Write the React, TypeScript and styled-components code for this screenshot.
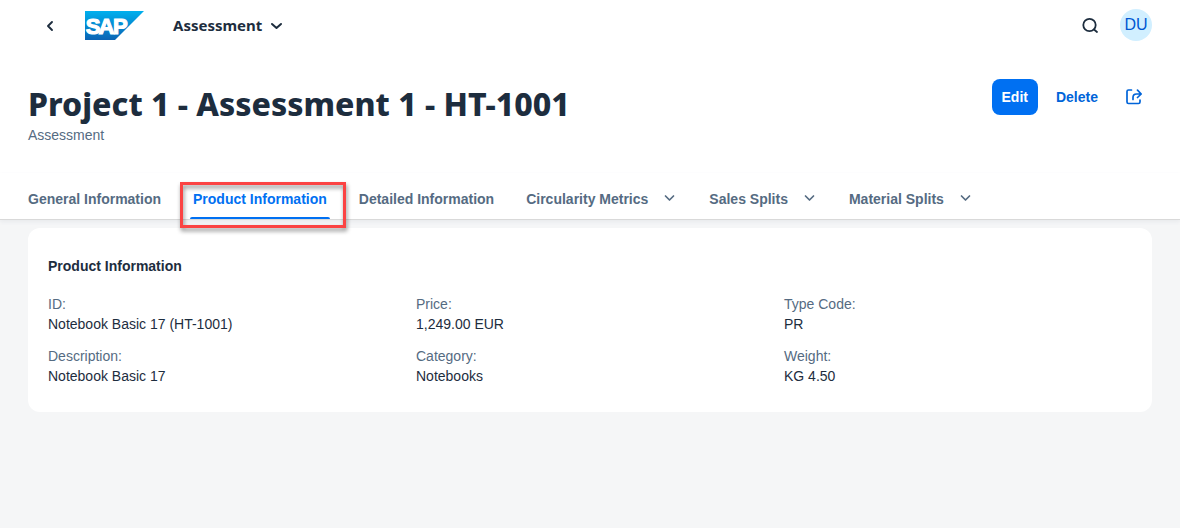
import React from "react";
import styled, { createGlobalStyle } from "styled-components";

const GlobalStyle = createGlobalStyle`
  *, *::before, *::after { box-sizing: border-box; }
  body {
    margin: 0;
    background: #f5f6f7;
    color: #1d2d3e;
    font-family: "Liberation Sans", Arial, sans-serif;
    font-size: 14px;
    line-height: 20px;
  }
  button { font: inherit; color: inherit; border: 0; background: none; padding: 0; cursor: pointer; }
`;

const ShellBar = styled.header`
  display: flex;
  align-items: center;
  height: 52px;
  padding: 0 28px 2px 40px;
  background: #fff;
`;

const IconButton = styled.button`
  display: flex;
  align-items: center;
  justify-content: center;
  width: 20px;
  height: 20px;
`;

const LogoLink = styled.a`
  display: flex;
  margin-left: 25px;
`;

const AppMenu = styled.button`
  && {
    display: flex;
    align-items: center;
    gap: 6px;
    margin-left: 29px;
    font-family: "Noto Sans", sans-serif;
    font-size: 15px;
    font-weight: 700;
  }
`;

const ShellActions = styled.div`
  display: flex;
  align-items: center;
  gap: 20px;
  margin-left: auto;
`;

const Avatar = styled.button`
  && {
    width: 32px;
    height: 32px;
    border-radius: 50%;
    background: #d1efff;
    color: #0057d2;
    font-size: 16px;
  }
`;

const PageHeader = styled.section`
  display: flex;
  justify-content: space-between;
  align-items: flex-start;
  padding: 27px 28px 28px;
  background: #fff;
`;

const Title = styled.h1`
  margin: 6px 0 2px;
  font-family: "Noto Sans", sans-serif;
  font-size: 32px;
  line-height: 38px;
  font-weight: 850;
`;

const Subtitle = styled.p`
  margin: 0;
  color: #556b82;
`;

const Actions = styled.div`
  display: flex;
  align-items: center;
  gap: 18px;
`;

const ActionButton = styled.button<{ $primary?: boolean }>`
  && {
    height: 36px;
    padding: ${(p) => (p.$primary ? "0 10px" : "0")};
    border-radius: 8px;
    font-weight: 700;
    color: ${(p) => (p.$primary ? "#fff" : "#0064d9")};
    background: ${(p) => (p.$primary ? "#0070f2" : "transparent")};
  }
`;

const ShareButton = styled(ActionButton)`
  display: flex;
  align-items: center;
  justify-content: center;
  width: 36px;
`;

const TabBar = styled.nav`
  display: flex;
  gap: 32px;
  height: 47px;
  padding: 0 28px;
  background: #fff;
  border-bottom: 1px solid #d9d9d9;
  box-shadow: 0 2px 4px rgba(85, 107, 130, 0.08);
`;

const Tab = styled.button<{ $active?: boolean }>`
  && {
    position: relative;
    display: flex;
    align-items: center;
    gap: 13px;
    padding-top: 6px;
    font-weight: 700;
    white-space: nowrap;
    color: ${(p) => (p.$active ? "#0070f2" : "#556b82")};
  }
  ${(p) =>
    p.$active &&
    `&::after {
      content: "";
      position: absolute;
      left: -3px;
      right: -3px;
      bottom: 0;
      height: 2px;
      border-radius: 2px 2px 0 0;
      background: #0070f2;
    }`}
`;

const Highlight = styled.span`
  position: absolute;
  z-index: 1;
  inset: 9px -19px -9px -13px;
  border: 3px solid #fb4343;
  filter: drop-shadow(1px 3px 2px rgba(0, 0, 0, 0.45));
  pointer-events: none;
`;

const Content = styled.main`
  padding: 8px 28px 28px;
`;

const Card = styled.section`
  padding: 28px 0 26px 20px;
  border-radius: 12px;
  background: #fff;
`;

const CardTitle = styled.h2`
  margin: 0 0 18px;
  font-size: 14px;
  line-height: 20px;
  font-weight: 700;
`;

const Fields = styled.dl`
  display: grid;
  grid-template-columns: repeat(3, 1fr);
  row-gap: 12px;
  margin: 0;
`;

const Label = styled.dt`
  color: #556b82;
`;

const Value = styled.dd`
  margin: 0;
`;

const Chevron = () => (
  <svg width="16" height="16" viewBox="0 0 16 16" fill="none" stroke="currentColor" strokeWidth="1.7" strokeLinecap="round" strokeLinejoin="round" aria-hidden="true">
    <path d="M4.500 5 L8.500 9 L12.500 5" />
  </svg>
);

const MenuArrow = () => (
  <svg width="16" height="16" viewBox="0 0 16 16" fill="none" stroke="currentColor" strokeWidth="2" strokeLinecap="round" strokeLinejoin="round" aria-hidden="true">
    <path d="M4 7 L8.500 11 L13 7" />
  </svg>
);

const Logo = () => (
  <svg width="59" height="29" viewBox="0 0 59 29" role="img" aria-label="SAP">
    <defs>
      <linearGradient id="logo" x1="0" y1="0" x2="0" y2="1">
        <stop offset="0" stopColor="#00b0ee" />
        <stop offset="1" stopColor="#0a63b4" />
      </linearGradient>
    </defs>
    <path d="M0 0H59L30 29H0Z" fill="url(#logo)" />
    <text y="22.500" fill="#fff" stroke="#fff" strokeWidth="1.200" fontFamily="Liberation Sans, sans-serif" fontWeight="700" fontSize="22">
      <tspan x="0.700">S</tspan>
      <tspan x="13.500">A</tspan>
      <tspan x="28">P</tspan>
    </text>
  </svg>
);

const tabs = [
  { label: "General Information" },
  { label: "Product Information", active: true },
  { label: "Detailed Information" },
  { label: "Circularity Metrics", menu: true },
  { label: "Sales Splits", menu: true },
  { label: "Material Splits", menu: true },
];

const fields = [
  ["ID", "Notebook Basic 17 (HT-1001)"],
  ["Price", "1,249.00 EUR"],
  ["Type Code", "PR"],
  ["Description", "Notebook Basic 17"],
  ["Category", "Notebooks"],
  ["Weight", "KG 4.50"],
];

export default function App() {
  return (
    <>
      <GlobalStyle />
      <ShellBar>
        <IconButton aria-label="Back">
          <svg width="16" height="18" viewBox="0 0 16 18" fill="none" stroke="currentColor" strokeWidth="1.900" strokeLinecap="round" strokeLinejoin="round">
            <path d="M10 6 L6 10 L10 14" />
          </svg>
        </IconButton>
        <LogoLink href="#">
          <Logo />
        </LogoLink>
        <AppMenu>
          Assessment
          <MenuArrow />
        </AppMenu>
        <ShellActions>
          <IconButton aria-label="Search">
            <svg width="18" height="18" viewBox="0 0 18 18" fill="none" stroke="currentColor" strokeWidth="1.800" strokeLinecap="round">
              <circle cx="8.500" cy="9" r="6.200" />
              <path d="M13 13.500 L16 16" />
            </svg>
          </IconButton>
          <Avatar>DU</Avatar>
        </ShellActions>
      </ShellBar>
      <PageHeader>
        <div>
          <Title>Project 1 - Assessment 1 - HT-1001</Title>
          <Subtitle>Assessment</Subtitle>
        </div>
        <Actions>
          <ActionButton $primary>Edit</ActionButton>
          <ActionButton>Delete</ActionButton>
          <ShareButton aria-label="Share">
            <svg width="16" height="16" viewBox="0 0 16 16" fill="none" stroke="currentColor" strokeWidth="1.700" strokeLinecap="round" strokeLinejoin="round">
              <path d="M5.500 1H2.500Q1 1 1 2.500V13Q1 14.500 2.500 14.500H12.500Q14 14.500 14 13V11" />
              <path d="M7 10.500V8.500Q7 5 10.500 5H15M11.500 1.200L15.200 5L11.500 8.500" />
            </svg>
          </ShareButton>
        </Actions>
      </PageHeader>
      <TabBar>
        {tabs.map((t) => (
          <Tab key={t.label} $active={t.active}>
            {t.label}
            {t.menu && <Chevron />}
            {t.active && <Highlight />}
          </Tab>
        ))}
      </TabBar>
      <Content>
        <Card>
          <CardTitle>Product Information</CardTitle>
          <Fields>
            {fields.map(([label, value]) => (
              <div key={label}>
                <Label>{label}:</Label>
                <Value>{value}</Value>
              </div>
            ))}
          </Fields>
        </Card>
      </Content>
    </>
  );
}
